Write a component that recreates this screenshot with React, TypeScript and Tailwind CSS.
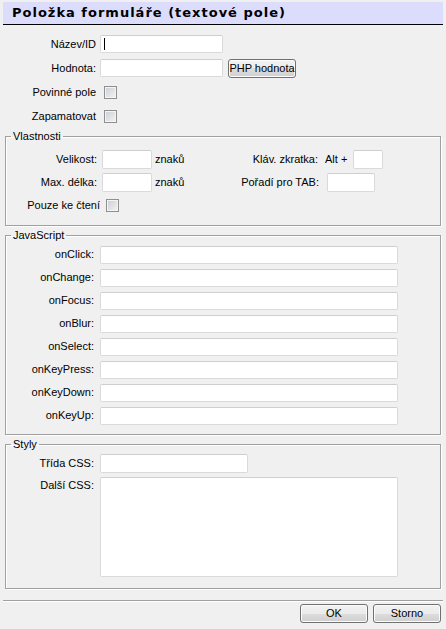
import React from 'react';
import clsx from 'clsx';

const jsEvents = ['onClick', 'onChange', 'onFocus', 'onBlur', 'onSelect', 'onKeyPress', 'onKeyDown', 'onKeyUp'];

const inputCls = 'h-[18px] rounded-[2px] border border-[#dadada] border-t-[#cfcfcf] bg-white px-[2px] text-[11px] outline-none';
const buttonCls =
  'h-[19px] w-[68px] rounded-[3px] border border-[#707070] bg-[linear-gradient(#f2f2f2_0%,#ebebeb_50%,#dddddd_50%,#cfcfcf_100%)] text-center text-[11px] leading-[17px] text-black shadow-[inset_0_0_0_1px_#fcfcfc]';

function Checkbox() {
  return (
    <input
      type="checkbox"
      className="h-[13px] w-[13px] appearance-none border border-[#8e8f8f] bg-[linear-gradient(135deg,#c9cdd3,#f4f4f5)] shadow-[inset_0_0_0_1px_#f4f4f4]"
    />
  );
}

function Group({ title, className, children }: { title: string; className?: string; children: React.ReactNode }) {
  return (
    <fieldset
      className={clsx(
        'mx-[5px] border border-[#a0a0a0] shadow-[inset_1px_1px_0_#fff,1px_1px_0_#fff]',
        className
      )}
    >
      <legend className="ml-[5px] px-[2px] leading-[14px]">{title}</legend>
      {children}
    </fieldset>
  );
}

export default function App() {
  return (
    <div className="min-h-[629px] w-[446px] bg-[#f0f0f0] pt-[2px] font-['Liberation_Sans',Arial,sans-serif] text-[11px] leading-[13px] text-black">
      <div className="mx-[3px] h-[23px] border-b border-black bg-[#dcdcfd] pl-[9px] font-['DejaVu_Sans',Verdana,sans-serif] text-[13px] font-bold leading-[22px] tracking-[1px]">
        Položka formuláře (textové pole)
      </div>

      <div className="pb-[1px] pt-[7px]">
        <div className="flex h-[24px] items-center">
          <label className="w-[96px] text-right">Název/ID</label>
          <div className="relative ml-[4px] flex">
            <input className={clsx(inputCls, 'w-[123px] border-[#a9c2dc] border-t-[#98b2cf]')} />
            <span className="absolute left-[4px] top-[3px] h-[12px] w-px bg-black" />
          </div>
        </div>
        <div className="flex h-[24px] items-center">
          <label className="w-[96px] text-right">Hodnota:</label>
          <input className={clsx(inputCls, 'ml-[4px] w-[123px]')} />
          <button className={clsx(buttonCls, 'ml-[5px]')}>PHP hodnota</button>
        </div>
        <div className="flex h-[24px] items-center">
          <label className="w-[96px] text-right">Povinné pole</label>
          <div className="ml-[8px] flex">
            <Checkbox />
          </div>
        </div>
        <div className="flex h-[24px] items-center">
          <label className="w-[96px] text-right">Zapamatovat</label>
          <div className="ml-[8px] flex">
            <Checkbox />
          </div>
        </div>
      </div>

      <Group title="Vlastnosti">
        <div className="pb-[8px] pt-[5px]">
          <div className="flex h-[23px] items-center">
            <div className="flex w-[194px] items-center">
              <label className="w-[91px] text-right">Velikost:</label>
              <input className={clsx(inputCls, 'ml-[5px] h-[19px] w-[50px]')} />
              <span className="ml-[3px]">znaků</span>
            </div>
            <label className="w-[118px] text-right">Kláv. zkratka:</label>
            <span className="ml-[7px] w-[28px]">Alt +</span>
            <input className={clsx(inputCls, 'h-[19px] w-[30px]')} />
          </div>
          <div className="flex h-[23px] items-center">
            <div className="flex w-[194px] items-center">
              <label className="w-[91px] text-right">Max. délka:</label>
              <input className={clsx(inputCls, 'ml-[5px] h-[19px] w-[50px]')} />
              <span className="ml-[3px]">znaků</span>
            </div>
            <label className="w-[119px] text-right">Pořadí pro TAB:</label>
            <input className={clsx(inputCls, 'ml-[8px] h-[19px] w-[48px]')} />
          </div>
          <div className="flex h-[23px] items-center">
            <label className="w-[94px] text-right">Pouze ke čtení</label>
            <div className="ml-[6px] flex">
              <Checkbox />
            </div>
          </div>
        </div>
      </Group>

      <Group title="JavaScript" className="mt-[2px]">
        <div className="pb-[7px] pt-[1px]">
          {jsEvents.map((ev) => (
            <div key={ev} className="flex h-[23px] items-center">
              <label className="w-[88px] text-right">{ev}:</label>
              <input className={clsx(inputCls, 'ml-[6px] w-[298px]')} />
            </div>
          ))}
        </div>
      </Group>

      <Group title="Styly" className="mt-[2px]">
        <div className="pb-[11px] pt-[1px]">
          <div className="flex h-[23px] items-center">
            <label className="w-[88px] text-right">Třída CSS:</label>
            <input className={clsx(inputCls, 'ml-[6px] h-[19px] w-[148px]')} />
          </div>
          <div className="flex pt-[2px]">
            <label className="w-[88px] pt-[2px] text-right">Další CSS:</label>
            <textarea className={clsx(inputCls, 'ml-[6px] h-[100px] w-[298px] resize-none')} />
          </div>
        </div>
      </Group>

      <div className="mx-[3px] mt-[11px] border-t border-[#a0a0a0] shadow-[0_1px_0_#fff]" />
      <div className="mt-[3px] flex justify-end gap-[5px] pr-[5px]">
        <button className={buttonCls}>OK</button>
        <button className={buttonCls}>Storno</button>
      </div>
    </div>
  );
}
